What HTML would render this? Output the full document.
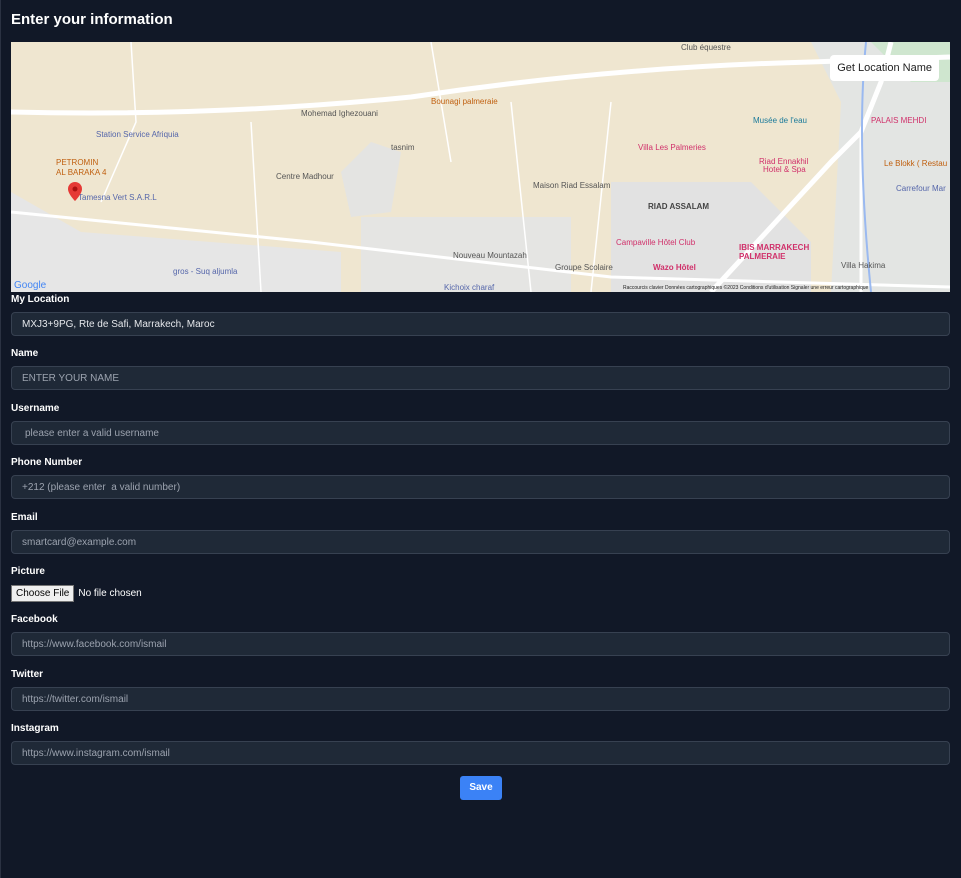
<!DOCTYPE html>
<html><head><meta charset="utf-8"><style>
*{box-sizing:border-box}
body{margin:0;width:961px;height:878px;background:#111827;font-family:"Liberation Sans",Arial,sans-serif;color:#fff;overflow:hidden;position:relative}
.edge{position:absolute;left:0;top:0;width:1px;height:878px;background:#2b3242}
h1{position:absolute;left:11px;top:11px;margin:0;font-size:15px;font-weight:bold}
.map{position:absolute;left:11px;top:42px;width:939px;height:250px;background:#efe6d0;overflow:hidden}
.lbl{position:absolute;left:11px;font-size:10px;font-weight:bold}
.inp{position:absolute;left:11px;width:939px;height:24px;background:#1f2937;border:1px solid #374151;border-radius:4px;font-size:10px;color:#9ca3af;padding:0 10px;line-height:23px}
.btn{position:absolute;left:460px;top:776px;width:42px;height:24px;background:#3b82f6;border-radius:3px;font-size:10px;font-weight:bold;text-align:center;line-height:24px}
.file{position:absolute;left:11px;top:585px;font-size:10px;display:flex;align-items:center}
.file span.b{background:#efefef;color:#000;border:1px solid #767676;padding:1px 4px;height:17px;line-height:13px;margin-right:4px;font-size:10px}
.gl{position:absolute;right:11px;top:13px;background:#fff;color:#222;font-size:11px;padding:7px 7px;border-radius:4px}
</style></head><body>
<div class="edge"></div>
<h1>Enter your information</h1>
<div class="map">
<svg width="939" height="250" style="position:absolute;left:0;top:0" font-family="Liberation Sans,Arial,sans-serif">
<rect x="0" y="0" width="939" height="250" fill="#efe6d0"/>
<path d="M0 150 L70 190 L200 200 L330 210 L330 250 L0 250Z" fill="#e6e6e6"/>
<path d="M330 130 L360 100 L390 110 L380 170 L340 175Z" fill="#e4e4e2"/>
<path d="M350 175 L560 175 L560 250 L350 250Z" fill="#e5e5e3"/>
<path d="M600 140 L740 140 L800 200 L800 250 L600 250Z" fill="#e2e2e2"/>
<path d="M800 0 L939 0 L939 250 L820 250 L830 60Z" fill="#e3e5e3"/>
<path d="M860 0 L939 0 L939 40 L900 40Z" fill="#cfe6cf"/>
<path d="M0 70 Q200 75 400 55 Q600 25 800 20 L939 15" stroke="#fff" stroke-width="5" fill="none"/>
<path d="M700 250 L820 120 L850 90 L870 40 L880 0" stroke="#fff" stroke-width="5" fill="none"/>
<path d="M850 90 L850 250" stroke="#fff" stroke-width="3" fill="none"/>
<path d="M0 170 L300 200 L600 235 L939 245" stroke="#fff" stroke-width="3" fill="none"/>
<path d="M855 0 Q845 100 860 250" stroke="#9ab9f0" stroke-width="2" fill="none"/>
<path d="M120 0 L125 80 L90 160 M240 80 L250 250 M500 60 L520 250 M600 60 L580 250 M420 0 L440 120" stroke="#fff" stroke-width="1.5" fill="none"/>
<g font-size="8" fill="#555">
<text x="85" y="95" fill="#5566aa">Station Service Afriquia</text>
<text x="45" y="123" fill="#c06010">PETROMIN</text><text x="45" y="133" fill="#c06010">AL BARAKA 4</text>
<text x="67" y="158" fill="#5566aa">Tamesna Vert S.A.R.L</text>
<text x="290" y="74">Mohemad Ighezouani</text>
<text x="380" y="108">tasnim</text>
<text x="265" y="137">Centre Madhour</text>
<text x="420" y="62" fill="#c06010">Bounagi palmeraie</text>
<text x="522" y="146">Maison Riad Essalam</text>
<text x="627" y="108" fill="#d0306a">Villa Les Palmeries</text>
<text x="637" y="167" fill="#444" font-weight="bold">RIAD ASSALAM</text>
<text x="605" y="203" fill="#d0306a">Campaville Hôtel Club</text>
<text x="728" y="208" fill="#d0306a" font-weight="bold">IBIS MARRAKECH</text>
<text x="728" y="217" fill="#d0306a" font-weight="bold">PALMERAIE</text>
<text x="642" y="228" fill="#d0306a" font-weight="bold">Wazo Hôtel</text>
<text x="442" y="216">Nouveau Mountazah</text>
<text x="544" y="228">Groupe Scolaire</text>
<text x="742" y="81" fill="#1a7a9a">Musée de l'eau</text>
<text x="860" y="81" fill="#d0306a">PALAIS MEHDI</text>
<text x="748" y="122" fill="#d0306a">Riad Ennakhil</text>
<text x="752" y="130" fill="#d0306a">Hotel &amp; Spa</text>
<text x="873" y="124" fill="#c06010">Le Blokk ( Restau</text>
<text x="885" y="149" fill="#5566aa">Carrefour Mar</text>
<text x="830" y="226">Villa Hakima</text>
<text x="162" y="232" fill="#5566aa">gros - Suq aljumla</text>
<text x="433" y="248" fill="#5566aa">Kichoix charaf</text>
<text x="670" y="8">Club équestre</text>
</g>
<g font-size="5" fill="#222"><text x="612" y="247">Raccourcis clavier   Données cartographiques ©2023   Conditions d'utilisation   Signaler une erreur cartographique</text></g>
<text x="3" y="246" font-size="10" fill="#4285f4">Google</text>
<path d="M57 147 a7 7 0 0 1 14 0 c0 5 -7 12 -7 12 c0 0 -7 -7 -7 -12z" fill="#e53935"/>
<circle cx="64" cy="147" r="2.5" fill="#a11"/>
</svg>
<div class="gl">Get Location Name</div>
</div>
<div class="lbl" style="top:294px">My Location</div>
<div class="inp" style="top:312px;color:#e5e7eb">MXJ3+9PG, Rte de Safi, Marrakech, Maroc</div>
<div class="lbl" style="top:348px">Name</div>
<div class="inp" style="top:366px">ENTER YOUR NAME</div>
<div class="lbl" style="top:403px">Username</div>
<div class="inp" style="top:421px;padding-left:13px">please enter a valid username</div>
<div class="lbl" style="top:457px">Phone Number</div>
<div class="inp" style="top:475px">+212 (please enter &nbsp;a valid number)</div>
<div class="lbl" style="top:512px">Email</div>
<div class="inp" style="top:530px">smartcard@example.com</div>
<div class="lbl" style="top:566px">Picture</div>
<div class="file"><span class="b">Choose File</span>No file chosen</div>
<div class="lbl" style="top:614px">Facebook</div>
<div class="inp" style="top:632px">https://www.facebook.com/ismail</div>
<div class="lbl" style="top:669px">Twitter</div>
<div class="inp" style="top:687px">https://twitter.com/ismail</div>
<div class="lbl" style="top:723px">Instagram</div>
<div class="inp" style="top:741px">https://www.instagram.com/ismail</div>
<div class="btn">Save</div>
</body></html>
